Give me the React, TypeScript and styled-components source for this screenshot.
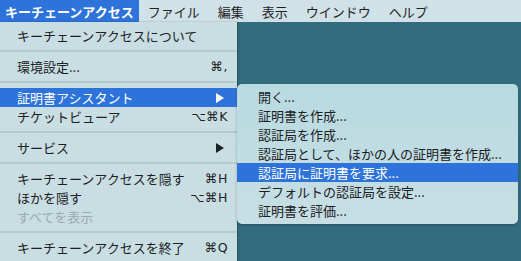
import styled, { createGlobalStyle } from "styled-components";

const GlobalStyle = createGlobalStyle`
  html, body {
    margin: 0;
    padding: 0;
    background: #336c7e;
    overflow: hidden;
  }
  body {
    font-family: "Noto Sans CJK JP", "DejaVu Sans", sans-serif;
    -webkit-font-smoothing: antialiased;
  }
`;

const Screen = styled.div`
  width: 521px;
  height: 261px;
  display: flex;
  flex-direction: column;
  overflow: hidden;
`;

const MenuBar = styled.div`
  height: 22px;
  display: flex;
  background: #d0e1e7;
  flex-shrink: 0;
`;

const BarItem = styled.div<{ $active?: boolean }>`
  display: flex;
  align-items: center;
  padding: ${(p) => (p.$active ? "0 5px" : "0 9px")};
  font-size: 13px;
  font-weight: ${(p) => (p.$active ? 700 : 400)};
  color: ${(p) => (p.$active ? "#ffffff" : "#1f2326")};
  background: ${(p) => (p.$active ? "#2e73d9" : "transparent")};
  white-space: nowrap;
`;

const Desk = styled.div`
  flex: 1;
  display: flex;
  align-items: flex-start;
`;

const MainMenu = styled.div`
  width: 237px;
  flex-shrink: 0;
  padding: 4px 0 20px;
  background: #c9dee3;
  box-shadow: 1px 0 2px rgba(0, 0, 0, 0.25);
`;

const SubMenu = styled.div`
  margin-top: 62px;
  width: 281px;
  padding: 3px 0 4px;
  border-radius: 5px;
  background: linear-gradient(#b8dae1, #c7dfe4);
  box-shadow: 0 1px 3px rgba(0, 0, 0, 0.25);
  position: relative;
  z-index: 1;
`;

const Item = styled.div<{ $highlight?: boolean; $disabled?: boolean; $indent?: number }>`
  height: 19px;
  display: flex;
  align-items: center;
  padding: 0 9px 0 ${(p) => p.$indent ?? 17}px;
  font-size: 13px;
  color: ${(p) => (p.$highlight ? "#ffffff" : p.$disabled ? "#9aabb0" : "#1c2023")};
  background: ${(p) => (p.$highlight ? "#2e73d9" : "transparent")};
  white-space: nowrap;
`;

const Label = styled.span`
  flex: 1;
`;

const Shortcut = styled.span`
  font-family: "DejaVu Sans", "Noto Sans CJK JP", sans-serif;
  font-size: 12.5px;
  letter-spacing: 0.5px;
`;

const Separator = styled.div`
  height: 12px;
  display: flex;
  align-items: center;
  &::after {
    content: "";
    flex: 1;
    height: 2px;
    background: #b5c9ce;
  }
`;

const Arrow = ({ color }: { color: string }) => (
  <svg width="9" height="10" viewBox="0 0 9 10" style={{ marginRight: 3 }}>
    <polygon points="0,0 8,5 0,10" fill={color} />
  </svg>
);

type Entry =
  | { sep: true }
  | { label: string; key?: string; sub?: boolean; on?: boolean; off?: boolean };

const mainItems: Entry[] = [
  { label: "キーチェーンアクセスについて" },
  { sep: true },
  { label: "環境設定...", key: "⌘," },
  { sep: true },
  { label: "証明書アシスタント", sub: true, on: true },
  { label: "チケットビューア", key: "⌥⌘K" },
  { sep: true },
  { label: "サービス", sub: true },
  { sep: true },
  { label: "キーチェーンアクセスを隠す", key: "⌘H" },
  { label: "ほかを隠す", key: "⌥⌘H" },
  { label: "すべてを表示", off: true },
  { sep: true },
  { label: "キーチェーンアクセスを終了", key: "⌘Q" },
];

const subItems = [
  "開く...",
  "証明書を作成...",
  "認証局を作成...",
  "認証局として、ほかの人の証明書を作成...",
  "認証局に証明書を要求...",
  "デフォルトの認証局を設定...",
  "証明書を評価...",
];

export default function App() {
  return (
    <Screen>
      <GlobalStyle />
      <MenuBar>
        <BarItem $active>キーチェーンアクセス</BarItem>
        <BarItem>ファイル</BarItem>
        <BarItem>編集</BarItem>
        <BarItem>表示</BarItem>
        <BarItem>ウインドウ</BarItem>
        <BarItem>ヘルプ</BarItem>
      </MenuBar>
      <Desk>
        <MainMenu>
          {mainItems.map((it, i) =>
            "sep" in it ? (
              <Separator key={i} />
            ) : (
              <Item key={i} $highlight={it.on} $disabled={it.off}>
                <Label>{it.label}</Label>
                {it.key && <Shortcut>{it.key}</Shortcut>}
                {it.sub && <Arrow color={it.on ? "#ffffff" : "#1c2023"} />}
              </Item>
            )
          )}
        </MainMenu>
        <SubMenu>
          {subItems.map((label, i) => (
            <Item key={i} $indent={21} $highlight={i === 4}>
              <Label>{label}</Label>
            </Item>
          ))}
        </SubMenu>
      </Desk>
    </Screen>
  );
}
